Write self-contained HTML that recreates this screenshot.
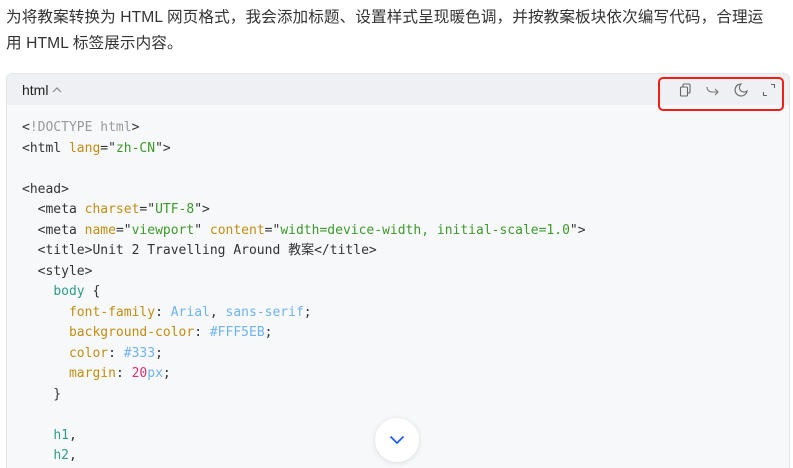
<!DOCTYPE html>
<html><head><meta charset="utf-8"><style>
html,body{margin:0;width:793px;height:468px;overflow:hidden}
body{background:#fff;font-family:"Liberation Sans","Noto Sans CJK SC",sans-serif;position:relative}
.p{position:absolute;left:6px;top:5px;font-size:15.6px;line-height:26px;color:#333;width:784px;letter-spacing:0.1px}
.box{position:absolute;left:6px;top:73px;width:782px;height:395px;border:1px solid #e4e5e7;border-bottom:none;border-radius:6px 6px 0 0;background:#f7f8fa;overflow:hidden}
.hd{height:31px;background:#eff0f3;position:relative}
.hd .t{position:absolute;left:15px;top:8px;font-size:14px;color:#222}
pre{margin:0;position:absolute;left:15px;top:44px;font-family:"DejaVu Sans Mono","Liberation Mono",monospace;font-size:13px;line-height:20.5px;color:#333}
.g{color:#999}.a{color:#c18d12}.s{color:#3d9a2a}.tg{color:#2f9c8c}.v{color:#6fb3f0}.n{color:#d6336c}
.red{position:absolute;left:658px;top:77px;width:122px;height:30px;border:2px solid #f01e14;border-radius:5px}
.btn{position:absolute;left:375px;top:418px;width:44px;height:44px;border-radius:50%;background:#fff;box-shadow:0 1px 6px rgba(0,0,0,.12)}
</style></head><body>
<div class="p">为将教案转换为 HTML 网页格式，我会添加标题、设置样式呈现暖色调，并按教案板块依次编写代码，合理运<br>用 HTML 标签展示内容。</div>
<div class="box"><div class="hd"><span class="t">html <svg width="10" height="7" viewBox="0 0 10 7" style="vertical-align:2px"><path d="M1 6L5 2L9 6" fill="none" stroke="#888" stroke-width="1.2"/></svg></span></div>
<pre>&lt;<span class="g">!DOCTYPE html</span>&gt;
&lt;html <span class="a">lang</span>="<span class="s">zh-CN</span>"&gt;

&lt;head&gt;
  &lt;meta <span class="a">charset</span>="<span class="s">UTF-8</span>"&gt;
  &lt;meta <span class="a">name</span>="<span class="s">viewport</span>" <span class="a">content</span>="<span class="s">width=device-width, initial-scale=1.0</span>"&gt;
  &lt;title&gt;Unit 2 Travelling Around 教案&lt;/title&gt;
  &lt;style&gt;
    <span class="tg">body</span> {
      <span class="a">font-family</span>: <span class="v">Arial</span>, <span class="v">sans-serif</span>;
      <span class="a">background-color</span>: <span class="v">#FFF5EB</span>;
      <span class="a">color</span>: <span class="v">#333</span>;
      <span class="a">margin</span>: <span class="n">20</span><span class="v">px</span>;
    }

    <span class="tg">h1</span>,
    <span class="tg">h2</span>,</pre></div>
<div class="red"></div>
<svg style="position:absolute;left:678px;top:83px" width="14" height="14" viewBox="0 0 14 14" fill="none" stroke="#666" stroke-width="1.1"><rect x="2.5" y="4" width="7" height="9" rx="1"/><path d="M5 4V2a1 1 0 0 1 1-1h5a1 1 0 0 1 1 1v7a1 1 0 0 1-1 1H9.5"/></svg>
<svg style="position:absolute;left:706px;top:83px" width="14" height="14" viewBox="0 0 14 14" fill="none" stroke="#777" stroke-width="1.1"><path d="M1 4c0 3 2 5 5 5h6M9 6l3 3-3 3"/></svg>
<svg style="position:absolute;left:734px;top:83px" width="14" height="14" viewBox="0 0 14 14" fill="none" stroke="#666" stroke-width="1.1"><path d="M7 1a6 6 0 1 0 6 7A4.5 4.5 0 0 1 7 1z"/></svg>
<svg style="position:absolute;left:762px;top:83px" width="14" height="14" viewBox="0 0 14 14" fill="none" stroke="#666" stroke-width="1.1"><path d="M9 1.5h3.5V5M1.5 9v3.5H5"/></svg>
<div class="btn"><svg style="position:absolute;left:14px;top:17px" width="16" height="10" viewBox="0 0 16 10"><path d="M1.5 1.5L8 8l6.5-6.5" fill="none" stroke="#1f5ef5" stroke-width="1.8"/></svg></div>
</body></html>
